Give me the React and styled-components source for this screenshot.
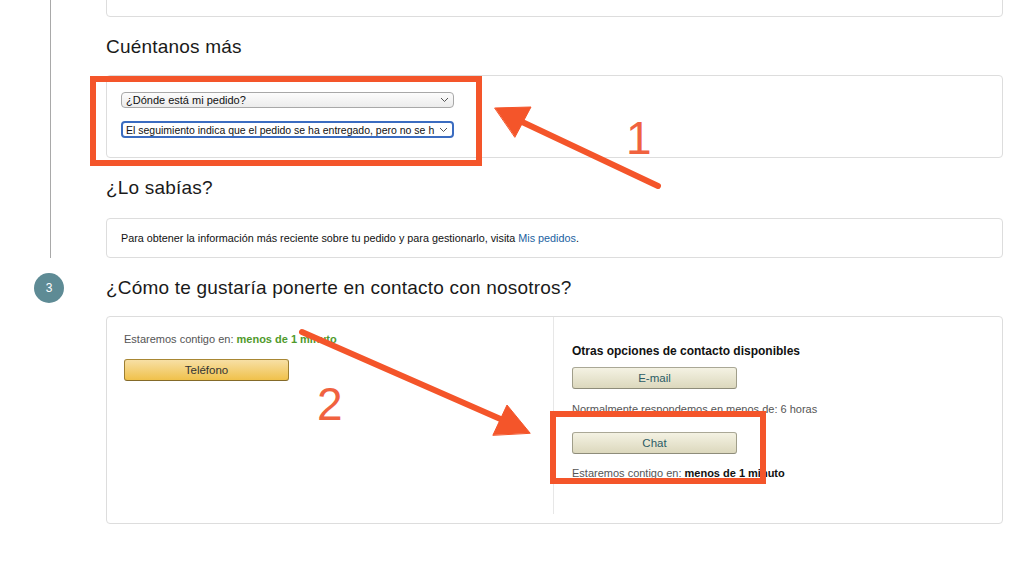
import styled, { createGlobalStyle } from "styled-components";

const GlobalStyle = createGlobalStyle`
  html, body {
    margin: 0;
    background: #fff;
  }
  body {
    font-family: "Liberation Sans", Arial, sans-serif;
    color: #333;
  }
`;

const Page = styled.div`
  position: relative;
  width: 1024px;
  height: 576px;
  overflow: hidden;
`;

const Step = styled.section`
  display: grid;
  grid-template-columns: 106px 1fr;
  padding-right: 21px;
`;

const Rail = styled.div`
  display: flex;
  flex-direction: column;
  align-items: flex-start;
`;

const RailLine = styled.div`
  flex: 1;
  width: 1px;
  margin-left: 50px;
  background: #a9a9a9;
`;

const StepBadge = styled.div`
  width: 30px;
  height: 30px;
  margin: 15px 0 0 34px;
  border-radius: 50%;
  background: #5e8b95;
  color: #fff;
  font-size: 12px;
  display: flex;
  align-items: center;
  justify-content: center;
`;

const Body = styled.div`
  display: flex;
  flex-direction: column;
`;

const Card = styled.div`
  border: 1px solid #ddd;
  border-radius: 4px;
  background: #fff;
  box-sizing: border-box;
`;

const CutCard = styled(Card)`
  height: 41px;
  margin-top: -24px;
`;

const Heading = styled.h2`
  margin: 18px 0 ${(p) => p.$after || 16}px;
  font-size: 19px;
  line-height: 24px;
  letter-spacing: 0.2px;
  font-weight: normal;
  color: #1a1a1a;
`;

const SelectCard = styled(Card)`
  display: flex;
  flex-direction: column;
  gap: 13px;
  padding: 16px 14px 19px;
`;

const SelectBox = styled.div`
  display: flex;
  align-items: center;
  justify-content: space-between;
  gap: 4px;
  width: 333px;
  height: ${(p) => (p.$focused ? 17 : 16)}px;
  box-sizing: border-box;
  padding: 0 4px 0 ${(p) => (p.$focused ? 3 : 4)}px;
  border: ${(p) => (p.$focused ? "2px solid #3b6cc0" : "1px solid #a8a8a8")};
  border-radius: 4px;
  background: ${(p) =>
    p.$focused ? "#fff" : "linear-gradient(#fcfcfc, #ececec)"};
  font-size: ${(p) => (p.$focused ? 10.5 : 11)}px;
  color: #111;
`;

const SelectText = styled.span`
  white-space: nowrap;
`;

const Chevron = () => (
  <svg width="9" height="6" viewBox="0 0 9 6" style={{ flexShrink: 0 }}>
    <polyline points="1,1 4.5,4.5 8,1" fill="none" stroke="#555" strokeWidth="1" />
  </svg>
);

const InfoCard = styled(Card)`
  padding: 12px 14px;
  font-size: 10.8px;
  line-height: 14px;
  color: #111;
`;

const Link = styled.a`
  color: #2162a1;
  text-decoration: none;
`;

const ContactCard = styled(Card)`
  display: grid;
  grid-template-columns: 447px 1fr;
  padding-bottom: 9px;
`;

const ContactColumn = styled.div`
  display: flex;
  flex-direction: column;
  align-items: flex-start;
  padding: ${(p) => (p.$main ? "15px 17px" : "28px 17px 34px 18px")};
  border-right: ${(p) => (p.$main ? "1px solid #e7e7e7" : "none")};
`;

const Note = styled.div`
  margin-top: ${(p) => p.$gap || 0}px;
  font-size: 11px;
  line-height: 14px;
  color: #555;
`;

const Strong = styled.b`
  color: ${(p) => p.$color || "#111"};
`;

const ColumnTitle = styled.div`
  font-size: 12px;
  line-height: 12px;
  font-weight: bold;
  color: #111;
`;

const Button = styled.button`
  margin-top: ${(p) => p.$gap || 0}px;
  width: 165px;
  height: 22px;
  padding: 0;
  border-radius: 3px;
  font-family: inherit;
  font-size: 11.5px;
  border: 1px solid;
  ${(p) =>
    p.$primary
      ? `
    background: linear-gradient(#f7dfa5, #f0c14b);
    border-color: #a88734 #9c7e31 #846a29;
    color: #333;
  `
      : `
    background: linear-gradient(#f4f2e3, #dcd8bd);
    border-color: #aaa896 #a09e8a #8e8c7a;
    color: #2c5c66;
  `}
`;

/* Annotation overlay */
const Overlay = styled.div`
  position: absolute;
  inset: 0;
  pointer-events: none;
`;

const Callout = styled.div`
  position: absolute;
  left: ${(p) => p.$x}px;
  top: ${(p) => p.$y}px;
  width: ${(p) => p.$w}px;
  height: ${(p) => p.$h}px;
  box-sizing: border-box;
  border: 6px solid #f4552a;
`;

const Marker = styled.span`
  position: absolute;
  left: ${(p) => p.$x}px;
  top: ${(p) => p.$y}px;
  font-family: "Liberation Sans", Arial, sans-serif;
  font-size: 46px;
  line-height: 1;
  color: #f0623f;
`;

const Arrows = () => (
  <svg
    width="1024"
    height="576"
    viewBox="0 0 1024 576"
    style={{ position: "absolute", inset: 0 }}
  >
    <g fill="#f4552a" stroke="#f4552a" strokeLinecap="round">
      <line x1="658" y1="186" x2="518" y2="120" strokeWidth="6" />
      <polygon points="495,108 531,107 515,137" strokeWidth="1" />
      <line x1="302" y1="332" x2="505" y2="421" strokeWidth="6" />
      <polygon points="530,433 507,405 493,435" strokeWidth="1" />
    </g>
  </svg>
);

export default function App() {
  return (
    <Page>
      <GlobalStyle />

      <Step>
        <Rail>
          <RailLine />
        </Rail>
        <Body>
          <CutCard />
          <Heading $after={16}>Cuéntanos más</Heading>
          <SelectCard>
            <SelectBox>
              <SelectText>¿Dónde está mi pedido?</SelectText>
              <Chevron />
            </SelectBox>
            <SelectBox $focused>
              <SelectText>
                El seguimiento indica que el pedido se ha entregado, pero no se h
              </SelectText>
              <Chevron />
            </SelectBox>
          </SelectCard>
          <Heading $after={18}>¿Lo sabías?</Heading>
          <InfoCard>
            Para obtener la información más reciente sobre tu pedido y para
            gestionarlo, visita <Link href="#">Mis pedidos</Link>.
          </InfoCard>
        </Body>
      </Step>

      <Step>
        <Rail>
          <StepBadge>3</StepBadge>
        </Rail>
        <Body>
          <Heading>¿Cómo te gustaría ponerte en contacto con nosotros?</Heading>
          <ContactCard>
            <ContactColumn $main>
              <Note>
                Estaremos contigo en: <Strong $color="#4f9a2c">menos de 1 minuto</Strong>
              </Note>
              <Button $primary $gap={13}>
                Teléfono
              </Button>
            </ContactColumn>
            <ContactColumn>
              <ColumnTitle>Otras opciones de contacto disponibles</ColumnTitle>
              <Button $gap={10}>E-mail</Button>
              <Note $gap={13}>Normalmente respondemos en menos de: 6 horas</Note>
              <Button $gap={16}>Chat</Button>
              <Note $gap={12}>
                Estaremos contigo en: <Strong>menos de 1 minuto</Strong>
              </Note>
            </ContactColumn>
          </ContactCard>
        </Body>
      </Step>

      <Overlay>
        <Callout $x={90} $y={76} $w={392} $h={90} />
        <Callout $x={550} $y={411} $w={216} $h={73} />
        <Arrows />
        <Marker $x={626} $y={115}>1</Marker>
        <Marker $x={317} $y={381}>2</Marker>
      </Overlay>
    </Page>
  );
}
